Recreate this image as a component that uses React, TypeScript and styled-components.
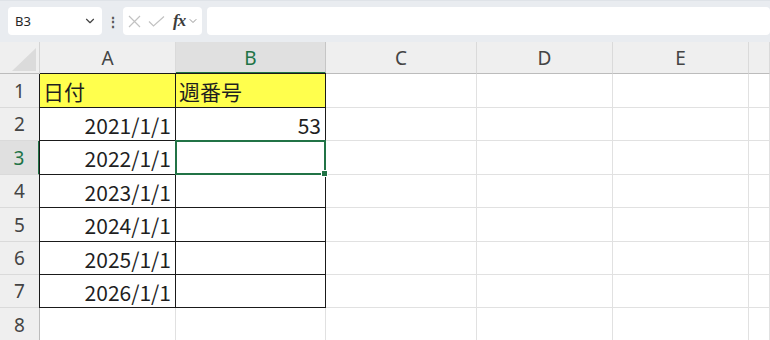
import styled, { createGlobalStyle } from "styled-components"
import { ChevronDown } from "lucide-react"

const GlobalStyle = createGlobalStyle`
  html, body {
    margin: 0;
    padding: 0;
    background: #ffffff;
  }
  body {
    font-family: "Noto Sans CJK JP", "Noto Sans", sans-serif;
    overflow: hidden;
  }
`

const Page = styled.div`
  display: flex;
  flex-direction: column;
  width: 770px;
  height: 340px;
  overflow: hidden;
  background: #ffffff;
`

const FormulaBar = styled.div`
  display: flex;
  flex: none;
  align-items: flex-start;
  height: 42px;
  box-sizing: border-box;
  padding: 6px 0 0 8px;
  background: #e9ecf0;
  border-top: 1px solid #dfe3e8;
`

const Box = styled.div<{ $width?: number; $grow?: boolean }>`
  display: flex;
  align-items: center;
  box-sizing: border-box;
  height: 28px;
  width: ${(p) => (p.$width ? `${p.$width}px` : "auto")};
  flex: ${(p) => (p.$grow ? "1" : "none")};
  background: #ffffff;
  border-radius: 4px;
  svg {
    flex: none;
  }
`

const NameBox = styled(Box)`
  justify-content: space-between;
  padding: 0 5px 0 7px;
  font-family: "Noto Sans", "Liberation Sans", sans-serif;
  font-size: 13px;
  color: #262626;
`

const Dots = styled.div`
  width: 21px;
  height: 28px;
  display: flex;
  align-items: center;
  justify-content: center;
  color: #555;
  font-size: 14px;
  font-weight: 700;
`

const IconBox = styled(Box)`
  padding: 0 2px 0 5px;
  margin-right: 5px;
`

const Fx = styled.span`
  font-family: "Liberation Serif", serif;
  font-style: italic;
  font-weight: 700;
  font-size: 17px;
  color: #3c3c3c;
  margin: 0 2px 0 8px;
  letter-spacing: -1px;
`

const Sheet = styled.div`
  display: grid;
  flex: none;
  grid-template-columns: 40px 136px 150px 151px 136px 136px 1fr;
  grid-template-rows: 32px 34px 33px 34px 33px 34px 33px 33px 34px;
`

const Corner = styled.div`
  position: relative;
  background: #efefef;
  border-right: 1px solid #d4d4d4;
  border-bottom: 1px solid #bcbcbc;
  box-sizing: border-box;
  svg {
    position: absolute;
    right: 3px;
    bottom: 2px;
  }
`

const ColHead = styled.div<{ $active?: boolean }>`
  display: flex;
  align-items: center;
  justify-content: center;
  box-sizing: border-box;
  background: ${(p) => (p.$active ? "#e0e0e0" : "#efefef")};
  color: ${(p) => (p.$active ? "#217346" : "#444444")};
  border-right: 1px solid ${(p) => (p.$active ? "#c6c6c6" : "#dadada")};
  border-bottom: ${(p) => (p.$active ? "2px solid #217346" : "1px solid #bcbcbc")};
  padding-top: ${(p) => (p.$active ? "1px" : "0")};
  font-family: "Noto Sans", "Liberation Sans", sans-serif;
  font-size: 19px;
`

const RowHead = styled.div<{ $active?: boolean }>`
  display: flex;
  align-items: center;
  justify-content: center;
  box-sizing: border-box;
  background: ${(p) => (p.$active ? "#e0e0e0" : "#efefef")};
  color: ${(p) => (p.$active ? "#217346" : "#444444")};
  border-right: ${(p) => (p.$active ? "2px solid #217346" : "1px solid #bcbcbc")};
  border-bottom: 1px solid #dadada;
  font-family: "Noto Sans", "Liberation Sans", sans-serif;
  font-size: 19px;
`

const Cell = styled.div<{
  $fill?: string
  $boxed?: boolean
  $left?: boolean
  $top?: boolean
  $right?: boolean
}>`
  position: relative;
  display: flex;
  align-items: center;
  justify-content: ${(p) => (p.$right ? "flex-end" : "flex-start")};
  box-sizing: border-box;
  padding: 1px 4px 0 3px;
  background: ${(p) => p.$fill || "#ffffff"};
  border-right: 1px solid ${(p) => (p.$boxed ? "#1a1a1a" : "#e1e1e1")};
  border-bottom: 1px solid ${(p) => (p.$boxed ? "#1a1a1a" : "#e1e1e1")};
  box-shadow: ${(p) =>
    [p.$left ? "-1px 0 0 #1a1a1a" : "", p.$top ? "0 -1px 0 #1a1a1a" : ""]
      .filter(Boolean)
      .join(", ") || "none"};
  font-size: 21px;
  color: #1f1f1f;
  white-space: nowrap;
`

const Selection = styled.div`
  position: absolute;
  top: -1px;
  left: -1px;
  right: -1px;
  bottom: -1px;
  border: 2px solid #217346;
  z-index: 2;
  pointer-events: none;
`

const FillHandle = styled.div`
  position: absolute;
  right: -4px;
  bottom: -4px;
  width: 5px;
  height: 5px;
  background: #217346;
  border: 1px solid #ffffff;
`

const columns = ["A", "B", "C", "D", "E", ""]
const data: [string, string][] = [
  ["日付", "週番号"],
  ["2021/1/1", "53"],
  ["2022/1/1", ""],
  ["2023/1/1", ""],
  ["2024/1/1", ""],
  ["2025/1/1", ""],
  ["2026/1/1", ""],
  ["", ""],
]

const CancelIcon = () => (
  <svg width="13" height="13" viewBox="0 0 13 13">
    <path d="M1 1 L12 12 M12 1 L1 12" stroke="#c2c2c2" strokeWidth="1.2" fill="none" />
  </svg>
)

const EnterIcon = () => (
  <svg width="17" height="11" viewBox="0 0 17 11" style={{ marginLeft: 7 }}>
    <path d="M1 5.5 L5.5 10 L16 0.5" stroke="#c2c2c2" strokeWidth="1.2" fill="none" />
  </svg>
)

const App = () => (
  <Page>
    <GlobalStyle />
    <FormulaBar>
      <NameBox $width={94}>
        <span>B3</span>
        <ChevronDown size={14} strokeWidth={2} color="#444" />
      </NameBox>
      <Dots>⋮</Dots>
      <IconBox $width={79}>
        <CancelIcon />
        <EnterIcon />
        <Fx>fx</Fx>
        <ChevronDown size={12} strokeWidth={1.8} color="#8a8a8a" />
      </IconBox>
      <Box $grow />
    </FormulaBar>
    <Sheet>
      <Corner>
        <svg width="24" height="23" viewBox="0 0 24 23">
          <polygon points="24,0 24,23 0,23" fill="#dbdbdb" />
        </svg>
      </Corner>
      {columns.map((c) => (
        <ColHead key={c || "f"} $active={c === "B"}>
          {c}
        </ColHead>
      ))}
      {data.map((row, i) => {
        const n = i + 1
        const boxed = n <= 7
        return [
          <RowHead key={`h${n}`} $active={n === 3}>
            {n}
          </RowHead>,
          <Cell
            key={`a${n}`}
            $boxed={boxed}
            $left={boxed}
            $top={n === 1}
            $right={n > 1}
            $fill={n === 1 ? "#ffff4d" : undefined}
          >
            {row[0]}
          </Cell>,
          <Cell
            key={`b${n}`}
            $boxed={boxed}
            $top={n === 1}
            $right={n > 1}
            $fill={n === 1 ? "#ffff4d" : undefined}
          >
            {row[1]}
            {n === 3 && (
              <Selection>
                <FillHandle />
              </Selection>
            )}
          </Cell>,
          <Cell key={`c${n}`} />,
          <Cell key={`d${n}`} />,
          <Cell key={`e${n}`} />,
          <Cell key={`f${n}`} />,
        ]
      })}
    </Sheet>
  </Page>
)

export default App
